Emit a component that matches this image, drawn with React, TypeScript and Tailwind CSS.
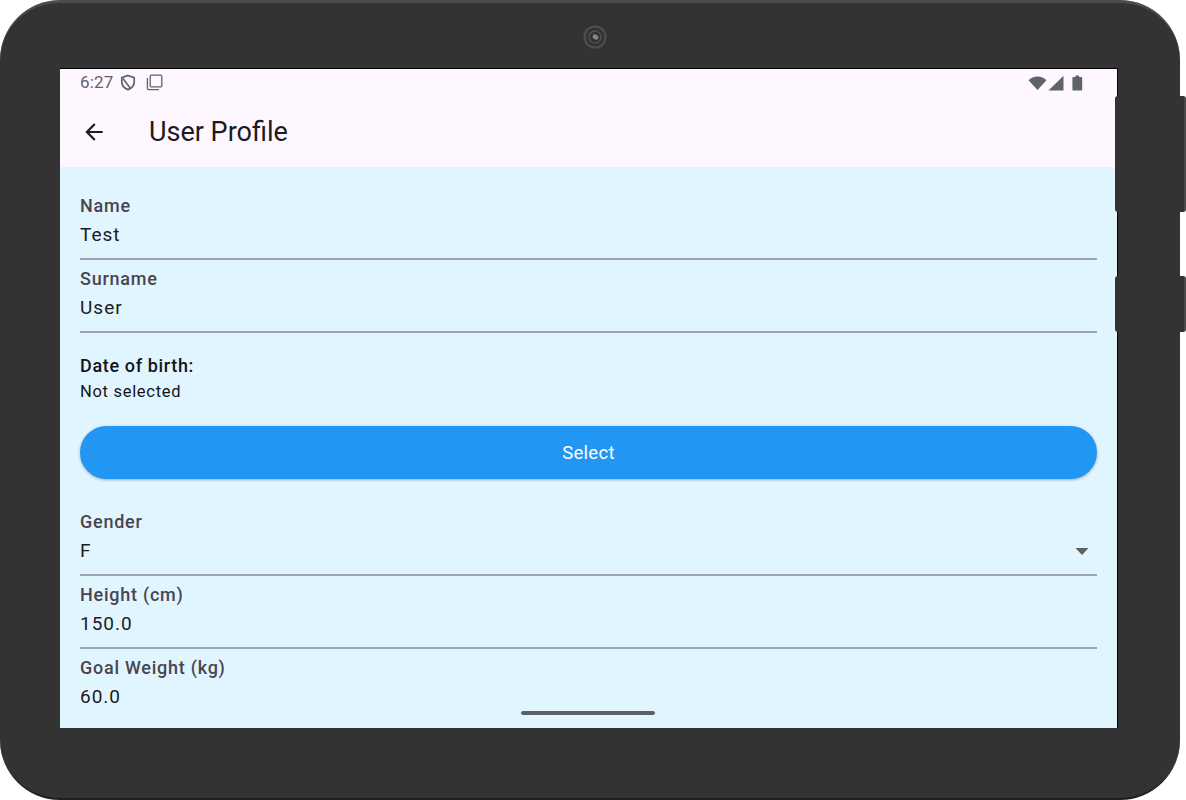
import { ReactNode } from "react";

function Field({ label, children, line = true }: { label: string; children: ReactNode; line?: boolean }) {
  return (
    <div className={`h-[73px] pt-[8px] ${line ? "border-b-[2px] border-[#a0a3aa]" : ""}`}>
      <div className="h-[22px] text-[18px] leading-[22px] font-medium tracking-[0.75px] text-[#49454f]">{label}</div>
      <div className="mt-[7px] h-[22px] text-[19px] leading-[22px] tracking-[1px] text-[#1d1b20]">{children}</div>
    </div>
  );
}

export default function App() {
  return (
    <div className="relative h-[800px] w-[1186px] overflow-hidden bg-white font-['Roboto',sans-serif]">
      <div className="relative h-[800px] w-[1180px] rounded-[60px] border-t-[3px] border-b-[2px] border-t-[#4c4c4c] border-b-[#1f1f1f] bg-[#333333] pl-[60px] pt-[65px]">
        <div className="absolute left-[583px] top-[22px] flex h-[24px] w-[24px] items-center justify-center">
          <svg width="24" height="24" viewBox="0 0 24 24">
            <circle cx="12" cy="12" r="10.5" fill="none" stroke="#4f4f4f" strokeWidth="2" />
            <circle cx="12" cy="12" r="6" fill="none" stroke="#4f4f4f" strokeWidth="1.5" />
            <ellipse cx="12.5" cy="12" rx="3" ry="2.4" fill="#858585" transform="rotate(35 12.5 12)" />
          </svg>
        </div>

        <div className="relative h-[660px] w-[1058px] overflow-hidden border-r border-t border-black bg-[#e1f5fe]">
          <div className="h-[98px] bg-[#fef7ff]">
            <div className="flex h-[27px] items-center justify-between pl-[20px] pr-[34px]">
              <div className="flex items-center text-[#5f6368]">
                <span className="text-[17px] leading-[27px] tracking-[0.2px]">6:27</span>
                <svg className="ml-[6px]" width="16" height="17" viewBox="0 0 16 17" fill="none" stroke="#5f6368" strokeWidth="1.7">
                  <path d="M8 1.5 14.2 3.6V8c0 3.5-2.6 6.2-6.2 7.6C4.4 14.2 1.8 11.5 1.8 8V3.6Z" />
                  <path d="M3 4.5 10.5 14.5" strokeWidth="1.5" />
                </svg>
                <svg className="ml-[10px]" width="17" height="17" viewBox="0 0 17 17" fill="none" stroke="#5f6368" strokeWidth="1.3">
                  <rect x="4.2" y="1.2" width="11.6" height="11.6" rx="1" />
                  <path d="M1.4 4v10.2c0 .8.6 1.4 1.4 1.4H13" />
                </svg>
              </div>
              <div className="flex items-center">
                <svg width="19" height="16" viewBox="0 0 19 16" fill="#5f6368">
                  <path d="M9.5 15 0.5 5.2C2.8 2.9 6 1.5 9.5 1.5s6.7 1.4 9 3.7Z" />
                </svg>
                <svg className="ml-[1px]" width="16" height="16" viewBox="0 0 16 16" fill="#5f6368">
                  <path d="M0.5 15.5 15.5 0.8V15.5Z" />
                </svg>
                <svg className="ml-[8px]" width="11" height="16" viewBox="0 0 11 16" fill="#5f6368">
                  <path d="M3.5 0.5H7V2H9.2C9.8 2 10.2 2.4 10.2 3V14.6C10.2 15.2 9.8 15.6 9.2 15.6H1.4C0.8 15.6 0.4 15.2 0.4 14.6V3C0.4 2.4 0.8 2 1.4 2H3.5Z" />
                </svg>
              </div>
            </div>
            <div className="flex h-[71px] items-center pl-[21px]">
              <svg width="26" height="26" viewBox="0 0 24 24" fill="#1d1b20">
                <path d="M20 11H7.83l5.59-5.59L12 4l-8 8 8 8 1.41-1.41L7.83 13H20v-2z" />
              </svg>
              <span className="ml-[42px] text-[27px] leading-[34px] text-[#1d1b20]">User Profile</span>
            </div>
          </div>

          <div className="px-[20px] pt-[20px]">
            <Field label="Name">Test</Field>
            <Field label="Surname">User</Field>

            <div className="mt-[21px] h-[24px] text-[18px] leading-[24px] font-medium tracking-[0.65px] text-[#15131a]">Date of birth:</div>
            <div className="mt-[3px] h-[22px] text-[16.5px] leading-[22px] tracking-[0.7px] text-[#15131a]">Not selected</div>

            <button className="mt-[23px] flex h-[53px] w-full items-center justify-center rounded-[27px] bg-[#2196f3] pt-[2px] text-[18.5px] tracking-[0.3px] text-white shadow-[0_1px_3px_rgba(0,0,0,0.3)]">
              Select
            </button>

            <div className="mt-[24px]">
              <Field label="Gender">
                <div className="flex items-center justify-between pr-[8px]">
                  <span>F</span>
                  <svg width="14" height="7" viewBox="0 0 14 7" fill="#5f6060">
                    <path d="M0.5 0H13.5L7 7Z" />
                  </svg>
                </div>
              </Field>
            </div>
            <Field label="Height (cm)">150.0</Field>
            <Field label="Goal Weight (kg)" line={false}>60.0</Field>
          </div>

          <div className="absolute bottom-[13px] left-[461px] h-[4px] w-[134px] rounded-full bg-[#5c6064]" />
        </div>
      </div>

      {/* side buttons sit over the edge of the screen */}
      <div className="absolute left-[1115px] top-[96px] h-[116px] w-[71px] rounded-[3px] border-r-[2px] border-[#4a4a4a] bg-[#333333]" />
      <div className="absolute left-[1115px] top-[276px] h-[56px] w-[71px] rounded-[3px] border-r-[2px] border-[#4a4a4a] bg-[#333333]" />
    </div>
  );
}
